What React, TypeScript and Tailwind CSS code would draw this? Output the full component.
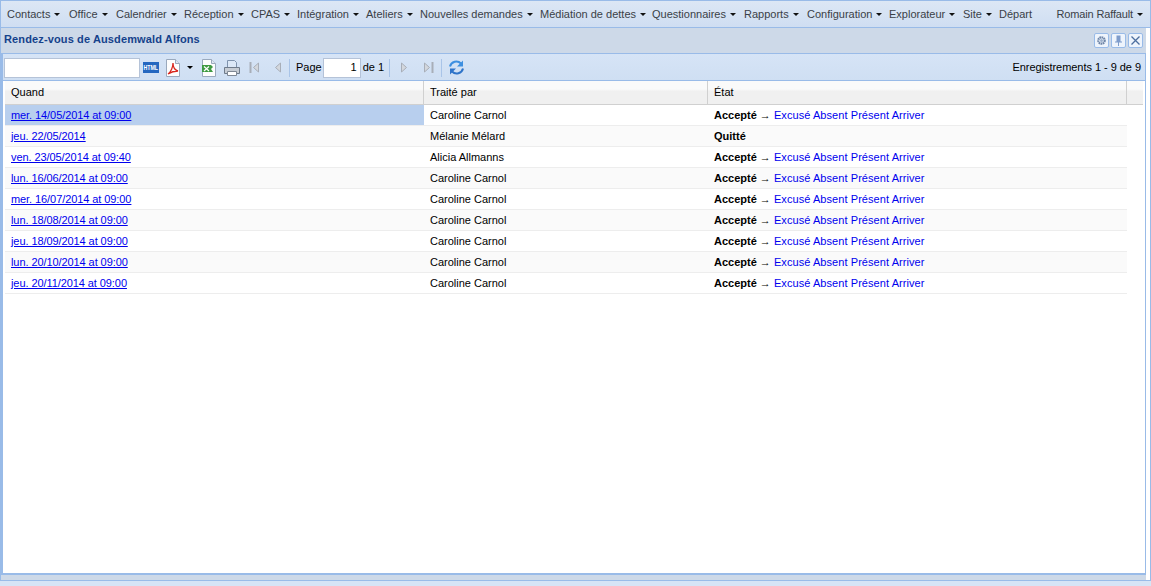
import type { ReactNode } from "react";

type Row = {
    when: string;
    by: string;
    state: string;
    actions: boolean;
};

const MENU = [
    { label: "Contacts", width: "w-[62px]" },
    { label: "Office", width: "w-[47px]" },
    { label: "Calendrier", width: "w-[68px]" },
    { label: "Réception", width: "w-[67px]" },
    { label: "CPAS", width: "w-[46px]" },
    { label: "Intégration", width: "w-[69px]" },
    { label: "Ateliers", width: "w-[54px]" },
    { label: "Nouvelles demandes", width: "w-[120px]" },
    { label: "Médiation de dettes", width: "w-[112px]" },
    { label: "Questionnaires", width: "w-[92px]" },
    { label: "Rapports", width: "w-[63px]" },
    { label: "Configuration", width: "w-[82px]" },
    { label: "Explorateur", width: "w-[74px]" },
    { label: "Site", width: "w-[36px]" },
];

const ROWS: Row[] = [
    { when: "mer. 14/05/2014 at 09:00", by: "Caroline Carnol", state: "Accepté", actions: true },
    { when: "jeu. 22/05/2014", by: "Mélanie Mélard", state: "Quitté", actions: false },
    { when: "ven. 23/05/2014 at 09:40", by: "Alicia Allmanns", state: "Accepté", actions: true },
    { when: "lun. 16/06/2014 at 09:00", by: "Caroline Carnol", state: "Accepté", actions: true },
    { when: "mer. 16/07/2014 at 09:00", by: "Caroline Carnol", state: "Accepté", actions: true },
    { when: "lun. 18/08/2014 at 09:00", by: "Caroline Carnol", state: "Accepté", actions: true },
    { when: "jeu. 18/09/2014 at 09:00", by: "Caroline Carnol", state: "Accepté", actions: true },
    { when: "lun. 20/10/2014 at 09:00", by: "Caroline Carnol", state: "Accepté", actions: true },
    { when: "jeu. 20/11/2014 at 09:00", by: "Caroline Carnol", state: "Accepté", actions: true },
];

function Caret() {
    return <span className="ml-[4px] mt-[1px] h-0 w-0 border-x-[3px] border-t-[3px] border-x-transparent border-t-[#111]" />;
}

function MenuBar() {
    return (
        <div className="flex h-[28px] shrink-0 items-center border border-[#99bbe8] bg-gradient-to-b from-[#dce7f5] to-[#cfdef2] pl-[6px] pr-[7px] text-[#3a3f47]">
            {MENU.map((m) => (
                <div key={m.label} className={`flex items-center whitespace-nowrap ${m.width}`}>
                    {m.label}
                    <Caret />
                </div>
            ))}
            <div>Départ</div>
            <div className="ml-auto flex items-center tracking-[-0.15px]">
                Romain Raffault
                <Caret />
            </div>
        </div>
    );
}

function ToolButton({ children }: { children: ReactNode }) {
    return (
        <div className="flex h-[15px] w-[15px] items-center justify-center rounded-[2px] border border-[#99bbe8] bg-[#eef4fc]">
            {children}
        </div>
    );
}

function TitleBar() {
    return (
        <div className="flex h-[25px] shrink-0 items-center bg-[#cdd9e8] pl-[3px] pr-[3px]">
            <span className="mb-[2px] font-bold tracking-[0.13px] text-[#15428b]">Rendez-vous de Ausdemwald Alfons</span>
            <div className="ml-auto flex gap-[2px]">
                <ToolButton>
                    <svg width="11" height="11" viewBox="0 0 11 11">
                        <circle cx="5.5" cy="5.5" r="3.2" fill="none" stroke="#6f86a8" strokeWidth="2.2" strokeDasharray="1.6 0.5" />
                        <circle cx="5.5" cy="5.5" r="1.5" fill="#9db0cb" />
                    </svg>
                </ToolButton>
                <ToolButton>
                    <svg width="11" height="11" viewBox="0 0 11 11">
                        <path d="M3.5 0.5h4v6h1.5v1h-7v-1h1.5z" fill="#7e9ccb" />
                        <path d="M5.5 7v4" stroke="#7e9ccb" />
                    </svg>
                </ToolButton>
                <ToolButton>
                    <svg width="11" height="11" viewBox="0 0 11 11">
                        <path d="M1.5 1.5l8 8M9.5 1.5l-8 8" stroke="#4d6f9f" strokeWidth="1.3" />
                    </svg>
                </ToolButton>
            </div>
        </div>
    );
}

function Sep() {
    return <div className="mx-[6px] h-[18px] w-px bg-[#a9c4e8]" />;
}

function Doc({ children }: { children: ReactNode }) {
    return (
        <svg width="16" height="18" viewBox="0 0 16 18">
            <path d="M1.5.5h9l4 4v13h-13z" fill="#fdfdfd" stroke="#9aa9bd" />
            <path d="M10.5.5v4h4" fill="#dfe7f2" stroke="#9aa9bd" />
            {children}
        </svg>
    );
}

function NavIcon({ dir, bar }: { dir: "left" | "right"; bar: boolean }) {
    const tri = dir === "left" ? "M9.5 3v9l-5-4.5z" : "M2.5 3v9l5-4.5z";
    const line = dir === "left" ? "M1.5 2v11" : "M10.5 2v11";
    return (
        <svg width="12" height="15" viewBox="0 0 12 15">
            <path d={tri} fill="#d3d7dd" stroke="#a8aeb8" />
            {bar && <path d={line} stroke="#a8aeb8" strokeWidth="2" />}
        </svg>
    );
}

function Toolbar() {
    return (
        <div className="flex h-[28px] shrink-0 items-center border-y border-[#99bbe8] bg-gradient-to-b from-[#d6e4f6] to-[#cfdff3] pl-[1px] pr-[4px] pt-[1px] text-black">
            <div className="h-[20px] w-[136px] border border-[#b5c3d8] bg-white" />
            <div className="ml-[3px] flex h-[11px] w-[16px] items-center justify-center bg-[#2467c0] text-[7px] font-bold leading-none text-white">
                <span className="scale-x-75">HTML</span>
            </div>
            <div className="ml-[6px]">
                <Doc>
                    <path d="M3 15c3-2 5-7 5-11 0 5 2 7 5 8-3 0-7 1-10 3z" fill="none" stroke="#d8261d" strokeWidth="1.3" />
                </Doc>
            </div>
            <span className="ml-[6px] h-0 w-0 border-x-[3px] border-t-[3px] border-x-transparent border-t-black" />
            <div className="ml-[8px]">
                <Doc>
                    <path d="M1 6h9l2 2-2 2 2 3H1z" fill="#3f9a42" />
                    <path d="M3 7.5l5 4.5M8 7.5l-5 4.5" stroke="#fff" strokeWidth="1.2" />
                </Doc>
            </div>
            <svg className="ml-[6px]" width="18" height="18" viewBox="0 0 18 18">
                <path d="M4.5 1.5h7l2 2v5h-9z" fill="#dce8f7" stroke="#7f93ad" />
                <path d="M1.5 8.5h15v6h-15z" fill="#c6ccd4" stroke="#6f7b8b" />
                <path d="M4.5 12.5h9v4h-9z" fill="#fff" stroke="#7f8894" />
            </svg>
            <div className="ml-[8px] flex w-[34px] justify-between">
                <NavIcon dir="left" bar />
                <NavIcon dir="left" bar={false} />
            </div>
            <Sep />
            <span>Page</span>
            <div className="ml-[1px] flex h-[20px] w-[38px] items-center justify-end border border-[#b5c3d8] bg-white pr-[3px]">1</div>
            <span className="ml-[2px] mr-[-1px]">de 1</span>
            <Sep />
            <div className="ml-[3px] mr-[1px] flex w-[35px] justify-between">
                <NavIcon dir="right" bar={false} />
                <NavIcon dir="right" bar />
            </div>
            <Sep />
            <svg width="17" height="17" viewBox="0 0 17 17">
                <path d="M2 7.5a6.5 6.5 0 0 1 11-3" fill="none" stroke="#3d8fe0" strokeWidth="2" />
                <path d="M15 1.5v6h-6z" fill="#3d8fe0" />
                <path d="M15 9.5a6.5 6.5 0 0 1-11 3" fill="none" stroke="#2f74c9" strokeWidth="2" />
                <path d="M2 15.5v-6h6z" fill="#2f74c9" />
            </svg>
            <span className="ml-auto tracking-[-0.04px]">Enregistrements 1 - 9 de 9</span>
        </div>
    );
}

function HeaderCell({ label, width }: { label: string; width: string }) {
    return (
        <div className={`flex h-full items-center border-r border-[#d0d0d0] pl-[6px] ${width}`}>{label}</div>
    );
}

function DataGrid() {
    return (
        <div className="pl-[2px] text-black">
            <div className="flex h-[24px] w-[1138px] border-b border-[#d0d0d0] bg-gradient-to-b from-[#fafafa] from-35% to-[#f0f0f0] to-45%">
                <HeaderCell label="Quand" width="w-[419px]" />
                <HeaderCell label="Traité par" width="w-[284px]" />
                <HeaderCell label="État" width="w-[419px]" />
            </div>
            <div className="w-[1122px]">
                {ROWS.map((r, i) => (
                    <div
                        key={r.when}
                        className={`flex h-[21px] items-center border-b border-[#ededed] ${i % 2 === 1 ? "bg-[#fafafa]" : "bg-white"}`}
                    >
                        <div className={`flex h-full w-[419px] items-center pl-[6px] ${i === 0 ? "bg-[#b8cfee]" : ""}`}>
                            <a className="tracking-[-0.08px] text-[#0000ee] underline">{r.when}</a>
                        </div>
                        <div className="w-[284px] pl-[6px]">{r.by}</div>
                        <div className="pl-[6px]">
                            <b>{r.state}</b>
                            {r.actions && (
                                <>
                                    {" → "}
                                    <span className="tracking-[0.07px] text-[#0000ee]">Excusé Absent Présent Arriver</span>
                                </>
                            )}
                        </div>
                    </div>
                ))}
            </div>
        </div>
    );
}

export default function App() {
    return (
        <div className="flex h-[586px] w-[1151px] flex-col overflow-hidden bg-white font-['Liberation_Sans',sans-serif] text-[11px]">
            <MenuBar />
            <div className="flex min-h-0 flex-1 border-x border-[#99bbe8] pr-[4px]">
                <div className="flex min-w-0 flex-1 flex-col">
                    <TitleBar />
                    <div className="flex min-h-0 flex-1 flex-col border-l-2 border-r border-[#99bbe8]">
                        <Toolbar />
                        <DataGrid />
                    </div>
                    <div className="h-[7px] shrink-0 border-t-2 border-[#99bbe8] bg-[#cdd9e8]" />
                </div>
            </div>
            <div className="h-[6px] shrink-0 border-t border-[#99bbe8] bg-[#d6e4f6]" />
        </div>
    );
}
